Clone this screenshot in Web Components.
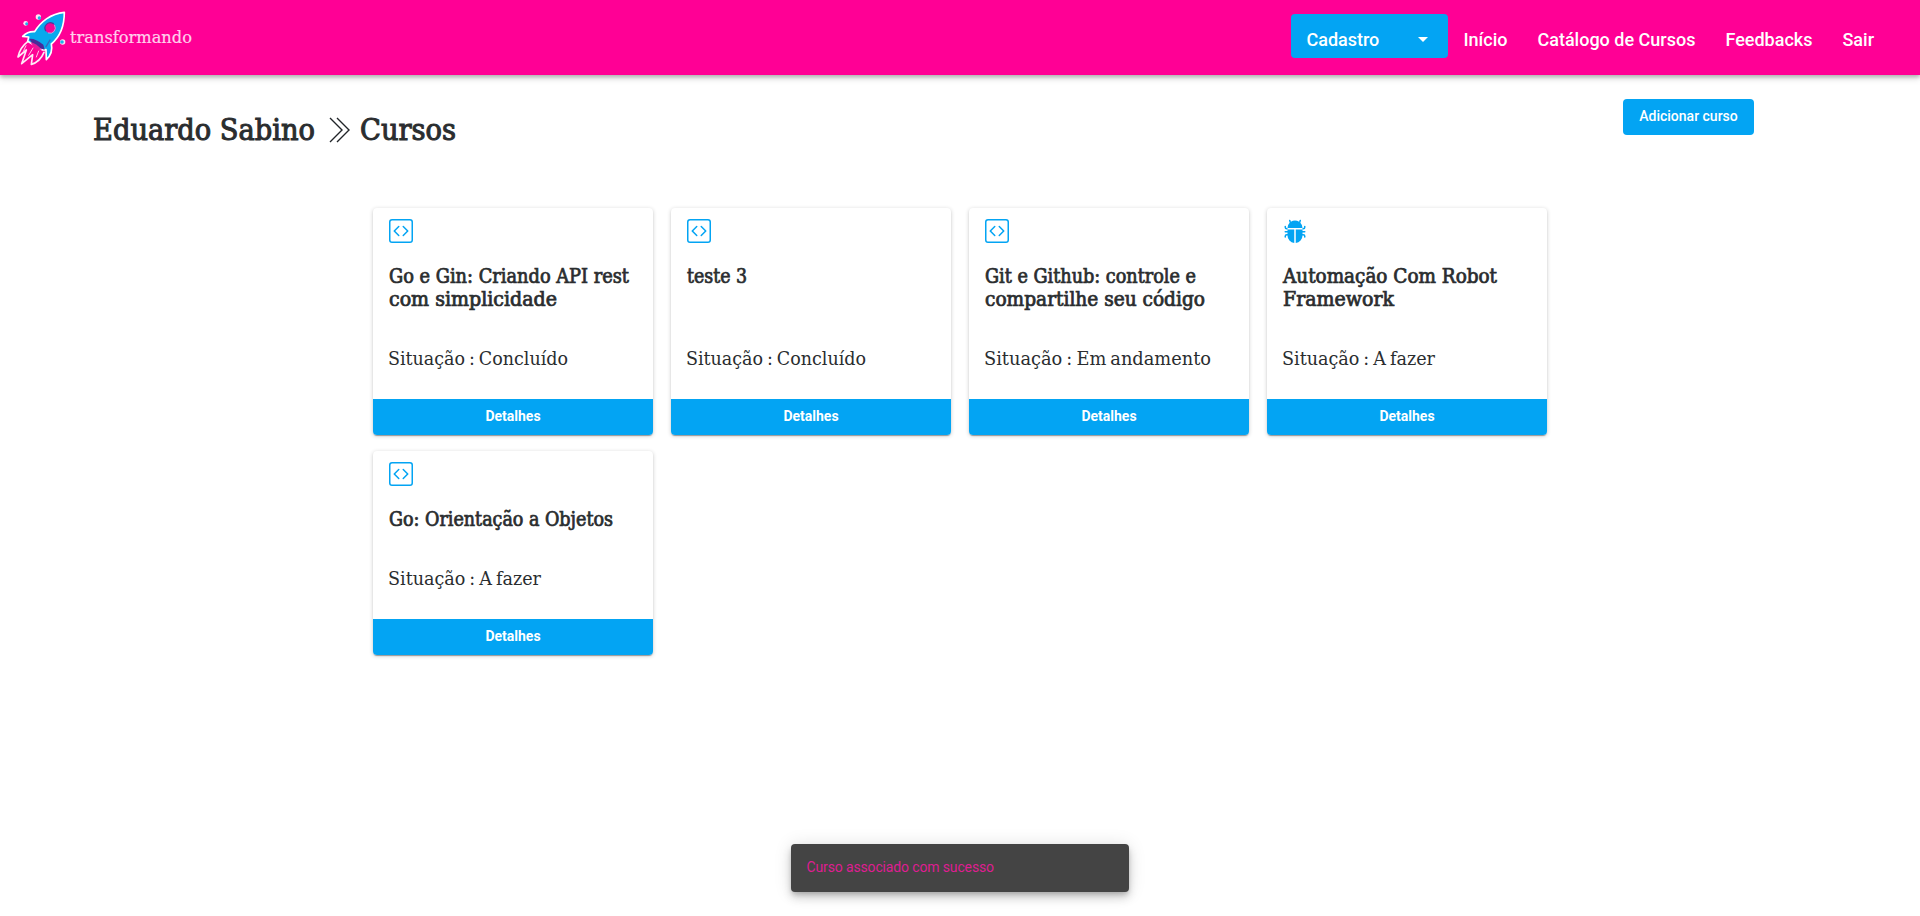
<!DOCTYPE html>
<html lang="pt-BR">
<head>
<meta charset="utf-8">
<title>Transformando</title>
<style>
body{margin:0;background:#fff;color:#2a2d2f;font-family:Roboto,sans-serif;overflow:hidden}
</style>
</head>
<body>
<app-page></app-page>
<script>
const define=(name,html,setup)=>customElements.define(name,class extends HTMLElement{
  connectedCallback(){
    if(this.shadowRoot)return;
    this.attachShadow({mode:'open'}).innerHTML=html;
    if(setup)setup(this,this.shadowRoot);
  }
});

/* Slab text condensed or expanded to a set line width */
define('slab-text',`<style>
:host{display:block;font-family:"Roboto Slab","DejaVu Serif Condensed","DejaVu Serif",serif;font-stretch:condensed;white-space:nowrap}
span{display:inline-block;transform-origin:0 50%}
</style><span><slot></slot></span>`,(el,root)=>{
  const s=root.querySelector('span'),w=+el.getAttribute('width');
  s.style.transform='scaleX('+w/s.getBoundingClientRect().width+')';
  el.style.width=w+'px';
});

const icons={
code:'<path d="M14 1a1 1 0 0 1 1 1v12a1 1 0 0 1-1 1H2a1 1 0 0 1-1-1V2a1 1 0 0 1 1-1h12zM2 0a2 2 0 0 0-2 2v12a2 2 0 0 0 2 2h12a2 2 0 0 0 2-2V2a2 2 0 0 0-2-2H2z"/><path d="M6.854 4.646a.5.5 0 0 1 0 .708L4.207 8l2.647 2.646a.5.5 0 0 1-.708.708l-3-3a.5.5 0 0 1 0-.708l3-3a.5.5 0 0 1 .708 0zm2.292 0a.5.5 0 0 0 0 .708L11.793 8l-2.647 2.646a.5.5 0 0 0 .708.708l3-3a.5.5 0 0 0 0-.708l-3-3a.5.5 0 0 0-.708 0z"/>',
bug:'<path d="M4.978.855a.5.5 0 1 0-.956.29l.41 1.352A4.985 4.985 0 0 0 3 6h10a4.985 4.985 0 0 0-1.432-3.503l.41-1.352a.5.5 0 1 0-.956-.29l-.291.956A4.978 4.978 0 0 0 8 1a4.979 4.979 0 0 0-2.731.811l-.29-.956z"/><path d="M13 6v1H8.5v8.975A5 5 0 0 0 13 11h.5a.5.5 0 0 1 .5.5v.5a.5.5 0 1 0 1 0v-.5a1.5 1.5 0 0 0-1.5-1.5H13V9h1.5a.5.5 0 0 0 0-1H13V7h.5A1.5 1.5 0 0 0 15 5.5V5a.5.5 0 0 0-1 0v.5a.5.5 0 0 1-.5.5H13zm-5.5 9.975V7H3V6h-.5a.5.5 0 0 1-.5-.5V5a.5.5 0 0 0-1 0v.5A1.5 1.5 0 0 0 2.5 7H3v1H1.5a.5.5 0 0 0 0 1H3v1h-.5A1.5 1.5 0 0 0 1 11.5v.5a.5.5 0 1 0 1 0v-.5a.5.5 0 0 1 .5-.5H3a5 5 0 0 0 4.5 4.975z"/>'
};
define('app-icon','<style>:host{display:block;width:24px;height:24px;color:#03a4f3}svg{display:block}</style><svg width="24" height="24" viewBox="0 0 16 16" fill="currentColor"></svg>',
 (el,root)=>root.querySelector('svg').innerHTML=icons[el.getAttribute('name')]);

define('app-logo',`<style>
:host{display:flex;align-items:flex-start;padding:10px 0 0 14px;color:#ffd0ec}
svg{display:block;width:56px;height:57px;overflow:visible}
slab-text{font-size:17px;line-height:20px;margin-top:17px;-webkit-text-stroke:.2px currentColor}
</style>
<svg viewBox="42 30 168 171" fill="none" stroke-linejoin="round" stroke-linecap="round">
<path d="M84 124C68 136 58 150 54 171L79 150 65 191 98 164 94 193C112 188 124 176 132 157" stroke="#ffe9f7" stroke-width="5"/>
<path d="M78 137 70 154M99 144 86 166M116 153 109 171" stroke="#ffc4e8" stroke-width="3"/>
<path d="M193 37C152 41 121 66 104 95 89 94 77 100 68 109L86 111 83 124 128 150 138 149 139 179C155 164 158 150 154 132 181 110 193 82 193 37Z" fill="#08a9ed" stroke="#fff" stroke-width="5"/>
<path d="M88 117Q103 114 130 134L134 149Q103 145 88 117Z" fill="#4a2b98"/>
<path d="M91 126Q108 130 126 149L106 148Z" fill="#e41b98"/>
<circle cx="151" cy="84" r="16" fill="#f30895"/><path d="M137 92A16 16 0 0 1 160 71" stroke="#51399d" stroke-width="4"/><path d="M164 76A16 16 0 0 1 145 99" stroke="#c5dcff" stroke-width="2"/>
<path d="M150 120 138 140" stroke="#3868bb" stroke-width="4"/>
<g fill="#ffe3f5"><circle cx="115" cy="51" r="8"/><circle cx="77" cy="70" r="7"/><circle cx="188" cy="126" r="8"/></g>
<g fill="#19b5ec"><circle cx="118" cy="54" r="5"/><circle cx="80" cy="71" r="4.5"/><circle cx="186" cy="126" r="5.5"/></g>
</svg><slab-text width="122">transformando</slab-text>`);

define('nav-link','<style>:host{display:block;padding:0 15px;font:500 18px/22px Roboto,sans-serif;margin-top:29px;color:#fff;white-space:nowrap}</style><slot></slot>');
define('nav-dropdown',`<style>
:host{display:flex;justify-content:space-between;box-sizing:border-box;width:157px;height:44px;margin-top:14px;padding:15px 20px 0 15px;border-radius:4px;background:#03a4f3;color:#fff;font:500 18px/22px Roboto,sans-serif}
svg{margin-top:8px}</style><slot></slot><svg width="10" height="5"><path d="M0 0H10L5 5Z" fill="#fff"/></svg>`);
define('app-header',`<style>
:host{display:flex;justify-content:space-between;height:75px;background:#ff0095;box-shadow:0 2px 4px rgba(0,0,0,.26),0 4px 7px rgba(0,0,0,.1)}
nav{display:flex;align-items:flex-start;padding-right:31px}
</style><app-logo></app-logo><nav><nav-dropdown>Cadastro</nav-dropdown><nav-link>Início</nav-link><nav-link>Catálogo de Cursos</nav-link><nav-link>Feedbacks</nav-link><nav-link>Sair</nav-link></nav>`);

define('page-title',`<style>
:host{display:flex;font-size:30.5px;line-height:40px;padding-top:11px}
slab-text{-webkit-text-stroke:1px currentColor}
svg{display:block;margin:7px 9px 0 13px}
</style><slab-text width="222">Eduardo Sabino</slab-text><svg width="23" height="26" fill="none" stroke="#212529" stroke-width="1.4"><path d="M2 1 14 13 2 25M9 1 21 13 9 25"/></svg><slab-text width="96">Cursos</slab-text>`);
define('action-button','<style>:host{display:block;box-sizing:border-box;width:131px;height:36px;border-radius:4px;background:#03a4f3;color:#fff;text-align:center;font:500 14px/34px Roboto,sans-serif}</style><slot></slot>');

define('course-card',`<style>
:host{display:flex;flex-direction:column;background:#fff;border-radius:4px;box-shadow:0 2px 1px -1px rgba(0,0,0,.2),0 1px 1px rgba(0,0,0,.14),0 1px 4px rgba(0,0,0,.2)}
app-icon{margin:11px 0 0 16px}
.title{display:block;margin:22px 0 0 16px;font-size:19.5px;line-height:23px;-webkit-text-stroke:.7px currentColor}
.status{margin:auto 0 0 15px;padding-bottom:28px;font-size:18.5px;line-height:24px;word-spacing:-1.5px}
button{border:0;border-radius:0 0 4px 4px;height:36px;background:#03a4f3;color:#fff;font:700 14px/33px Roboto,sans-serif;padding:0 0 1px}
</style><app-icon></app-icon><div class="title"><slot></slot></div><div class="status"></div><button>Detalhes</button>`,(el,root)=>{
  root.querySelector('app-icon').replaceWith(Object.assign(document.createElement('template'),{innerHTML:'<app-icon name="'+el.getAttribute('icon')+'"></app-icon>'}).content);
  root.querySelector('.status').innerHTML='<slab-text width="'+el.getAttribute('status-width')+'">Situação : '+el.getAttribute('status')+'</slab-text>';
});

define('course-grid','<style>:host{display:grid;grid-template-columns:repeat(4,280px);grid-template-rows:227px 204px;gap:16px 18px;margin:0 auto;width:1174px;padding-top:58px}</style><slot></slot>');
define('app-toast','<style>:host{position:absolute;left:791px;top:844px;box-sizing:border-box;width:338px;height:48px;padding:13px 16px 0 15.5px;border-radius:4px;background:#444;color:#df1d91;font:400 14px/20px Roboto,sans-serif;letter-spacing:-.14px;box-shadow:0 3px 5px -1px rgba(0,0,0,.2),0 6px 10px rgba(0,0,0,.14),0 1px 18px rgba(0,0,0,.12)}</style><slot></slot>');

define('app-page',`<style>
:host{display:block;height:916px}
.bar{display:flex;justify-content:space-between;padding:24px 166px 0 93px;height:51px}
</style>
<app-header></app-header>
<div class="bar"><page-title></page-title><action-button>Adicionar curso</action-button></div>
<course-grid>
<course-card icon="code" status="Concluído" status-width="180"><slab-text width="240">Go e Gin: Criando API rest</slab-text><slab-text width="168">com simplicidade</slab-text></course-card>
<course-card icon="code" status="Concluído" status-width="180"><slab-text width="60">teste 3</slab-text></course-card>
<course-card icon="code" status="Em andamento" status-width="227"><slab-text width="211">Git e Github: controle e</slab-text><slab-text width="220">compartilhe seu código</slab-text></course-card>
<course-card icon="bug" status="A fazer" status-width="153"><slab-text width="214">Automação Com Robot</slab-text><slab-text width="111">Framework</slab-text></course-card>
<course-card icon="code" status="A fazer" status-width="153"><slab-text width="224">Go: Orientação a Objetos</slab-text></course-card>
</course-grid>
<app-toast>Curso associado com sucesso</app-toast>`);
</script>
</body>
</html>
